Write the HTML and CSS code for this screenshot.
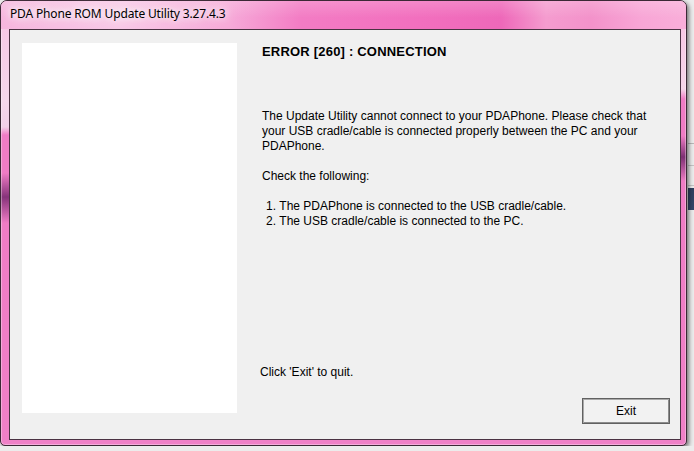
FILE: index.html
```html
<!DOCTYPE html>
<html>
<head>
  <title>PDA Phone ROM Update Utility</title>
  <link rel="stylesheet" href="styles.css">
</head>
<body>
<div class="window">
  <div class="titlebar">
    <span class="title">PDA Phone ROM Update Utility 3.27.4.3</span>
  </div>
  <div class="client">
    <div class="sidepanel"></div>
    <div class="content">
      <h1 class="error-title">ERROR [260] : CONNECTION</h1>
      <div class="message">
        <p>The Update Utility cannot connect to your PDAPhone. Please check that your USB cradle/cable is connected properly between the PC and your PDAPhone.</p>
        <p>Check the following:</p>
        <ol class="checks">
          <li>The PDAPhone is connected to the USB cradle/cable.</li>
          <li>The USB cradle/cable is connected to the PC.</li>
        </ol>
      </div>
      <p class="quit">Click 'Exit' to quit.</p>
      <div class="actions">
        <button type="button" class="exit-btn">Exit</button>
      </div>
    </div>
  </div>
</div>
</body>
</html>
```

FILE: styles.css
```css
body {
  margin: 0;
  font-family: "Liberation Sans", Arial, sans-serif;
  font-size: 12px;
  color: #000;
  background:
    linear-gradient(#2f3f5e, #34476a) no-repeat 688px 188px / 6px 22px,
    linear-gradient(#b9b9b9, #b9b9b9) no-repeat 688px 143px / 6px 1px,
    linear-gradient(#c4c4c4, #c4c4c4) no-repeat 688px 165px / 6px 1px,
    linear-gradient(#c4c4c4, #c4c4c4) no-repeat 688px 185px / 6px 1px,
    #ececec;
}

.window {
  box-sizing: border-box;
  width: 687px;
  height: 446px;
  padding: 0 5px 5px 8px;
  border: 1px solid #3b2835;
  border-radius: 7px 7px 5px 5px;
  box-shadow: 2px 2px 4px rgba(0, 0, 0, 0.5), inset 0 0 0 1px rgba(255, 255, 255, 0.35);
  background:
    linear-gradient(to bottom, #f7c3e3 0, #f5d7eb 100px, #f3d0e8 126px, #ef7cc5 134px, #ef7cc5 172px, #86337a 196px, #ef7cc5 222px, #ef80c7 100%) left top / 8px 100% no-repeat,
    linear-gradient(to bottom, #f8c1e2 0, #f6d6ea 88px, #ef7cc5 98px, #ef7cc5 135px, #7d2f73 156px, #ef7cc5 180px, #ef80c7 100%) right top / 6px 100% no-repeat,
    #ef80c7;
}

.titlebar {
  height: 28px;
  margin: 0 -5px 0 -8px;
  padding: 5px 0 0 9px;
  box-sizing: border-box;
  border-radius: 6px 6px 0 0;
  line-height: 16px;
  background:
    linear-gradient(to bottom, rgba(255, 255, 255, 0.18), rgba(255, 255, 255, 0) 60%),
    linear-gradient(to right, #f6b6de 0, #f8c9e7 120px, #f6a9d8 230px, #f37cc4 300px, #f26fbe 420px, #ee68b9 500px, #f59ccf 545px, #f392ca 590px, #f8a6d6 640px, #f9aed9 100%);
}

.title {
  font-family: "Noto Sans", "Open Sans", sans-serif;
  font-size: 12px;
  letter-spacing: -0.15px;
  color: #000;
  text-shadow: 0 0 6px #fff, 0 0 10px #fff, 0 0 14px rgba(255, 255, 255, 0.9);
}

.client {
  box-sizing: border-box;
  height: 411px;
  display: flex;
  padding: 13px 10px 0 12px;
  border: 1px solid #4a3242;
  background: #f0f0f0;
}

.sidepanel {
  flex: none;
  width: 215px;
  height: 370px;
  background: #fff;
}

.content {
  flex: 1;
  display: flex;
  flex-direction: column;
  margin-left: 23px;
  padding-bottom: 15px;
}

.error-title {
  margin: 1px 0 0 2px;
  font-size: 13px;
  line-height: 16px;
  letter-spacing: 0.2px;
  font-weight: bold;
}

.message {
  margin: 49px 0 0 2px;
  line-height: 15px;
}

.message p {
  margin: 0 0 15px;
}

.checks {
  margin: 0;
  padding-left: 4px;
  list-style-position: inside;
}

.quit {
  margin: auto 0 18px;
  line-height: 15px;
}

.actions {
  display: flex;
  justify-content: flex-end;
}

.exit-btn {
  width: 88px;
  height: 26px;
  padding: 0;
  font-family: "Liberation Sans", Arial, sans-serif;
  font-size: 12px;
  color: #000;
  background: #f2f2f2;
  border: 1px solid #616161;
  box-shadow: inset 1px 1px 0 #a9a9a9, inset -1px -1px 0 #8c8c8c;
}
```
